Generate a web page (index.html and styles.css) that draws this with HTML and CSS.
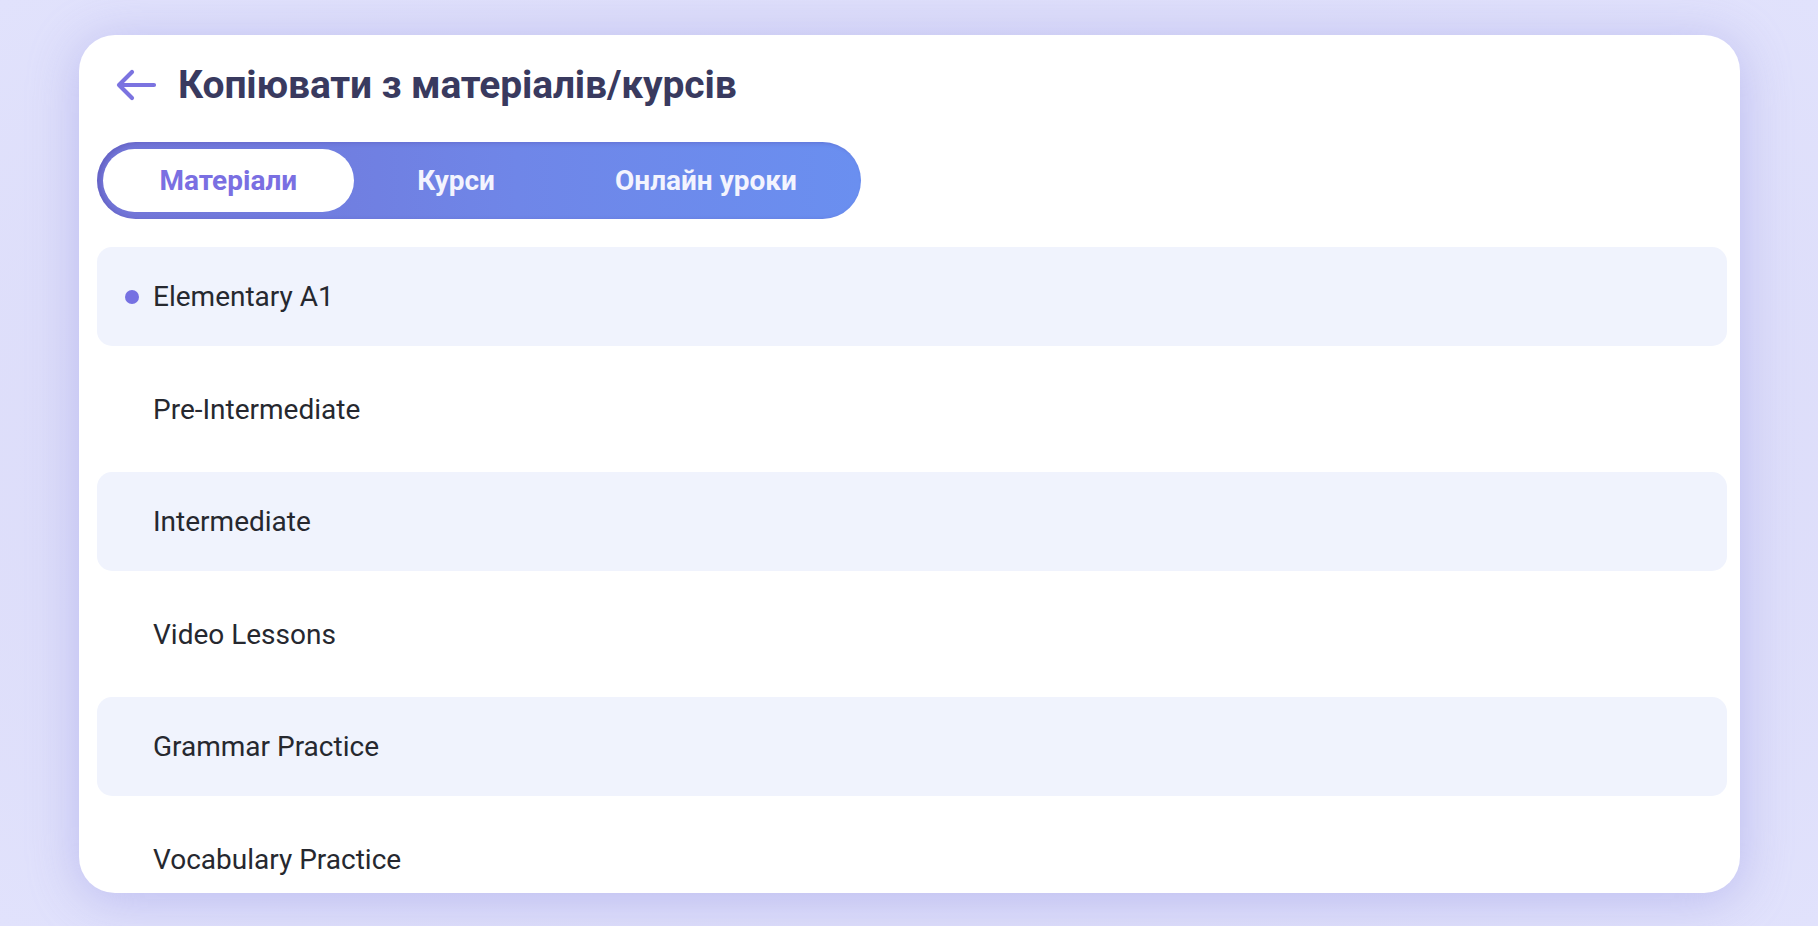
FILE: index.html
```html
<!DOCTYPE html>
<html lang="uk">

<head>
  <meta charset="UTF-8">
  <meta name="viewport" content="width=device-width, initial-scale=1.0">
  <title>copy-from-materials</title>

  <link rel="stylesheet" href="styles.css">

</head>

<body>
  <div id="card">
    <header class="card-header">
      <button class="back-button" aria-label="back">
        <svg width="42" height="32" viewBox="0 0 42 32" fill="none">
          <path d="M39 16H4M17 3L4 16l13 13" stroke="#7b73e0" stroke-width="4.2" stroke-linecap="round" stroke-linejoin="round" />
        </svg>
      </button>
      <h1 class="title">Копіювати з матеріалів/курсів</h1>
    </header>

    <div class="tabs">
      <button class="tab active">Матеріали</button>
      <button class="tab">Курси</button>
      <button class="tab">Онлайн уроки</button>
    </div>

    <ul class="list">
      <li class="list-item striped selected"><span class="marker"></span>Elementary A1</li>
      <li class="list-item"><span class="marker"></span>Pre-Intermediate</li>
      <li class="list-item striped"><span class="marker"></span>Intermediate</li>
      <li class="list-item"><span class="marker"></span>Video Lessons</li>
      <li class="list-item striped"><span class="marker"></span>Grammar Practice</li>
      <li class="list-item"><span class="marker"></span>Vocabulary Practice</li>
    </ul>
  </div>
</body>

</html>
```

FILE: styles.css
```css
/* reset */
* {
  box-sizing: border-box;
}

html,
body,
ul,
li,
h1,
button {
  margin: 0;
  padding: 0;
  list-style: none;
}

/* page */
body {
  width: 100vw;
  height: 100vh;
  overflow: hidden;
  padding: 35px 78px 33px 79px;
  background: radial-gradient(ellipse at center, #d3d3f6 0%, #dcdcf9 55%, #e1e2fc 100%);
  font-family: Roboto, "Noto Sans", sans-serif;
}

#card {
  height: 100%;
  padding: 26px 13px 0 18px;
  background-color: #fff;
  border-radius: 36px;
  box-shadow: 0 6px 50px rgba(176, 176, 236, 0.75);
  overflow: hidden;
}

/* header */
.card-header {
  display: flex;
  align-items: center;
  height: 48px;
  padding-left: 18px;
}

.back-button {
  display: flex;
  border: none;
  background: none;
  margin-right: 21px;
  cursor: pointer;
}

.title {
  font-size: 39px;
  font-weight: 700;
  color: #393a5f;
  letter-spacing: -0.15px;
}

/* tabs */
.tabs {
  display: inline-flex;
  gap: 7px;
  height: 77px;
  margin-top: 33px;
  padding: 7px 8px 7px 6px;
  border-radius: 40px;
  background: linear-gradient(90deg, #7274d6 0%, #6f86e8 55%, #6a8ff0 100%);
  box-shadow: inset 3px 1px 4px rgba(80, 70, 170, 0.4);
}

.tab {
  height: 63px;
  padding: 0 56.5px;
  border: none;
  border-radius: 32px;
  background: none;
  font-family: Roboto, "Noto Sans", sans-serif;
  font-size: 28px;
  font-weight: 700;
  color: #f3f4fe;
  cursor: pointer;
}

.tab.active {
  background-color: #fff;
  color: #7a6fe2;
}

/* list */
.list {
  margin-top: 28px;
}

.list-item {
  display: flex;
  align-items: center;
  height: 99px;
  margin-bottom: 13.5px;
  padding-left: 28px;
  border-radius: 15px;
  font-size: 28px;
  color: #26282f;
}

.list-item.striped {
  background-color: #f0f3fd;
}

.marker {
  width: 14px;
  height: 14px;
  margin-right: 14px;
  border-radius: 50%;
}

.list-item.selected .marker {
  background-color: #7671e2;
}
```
